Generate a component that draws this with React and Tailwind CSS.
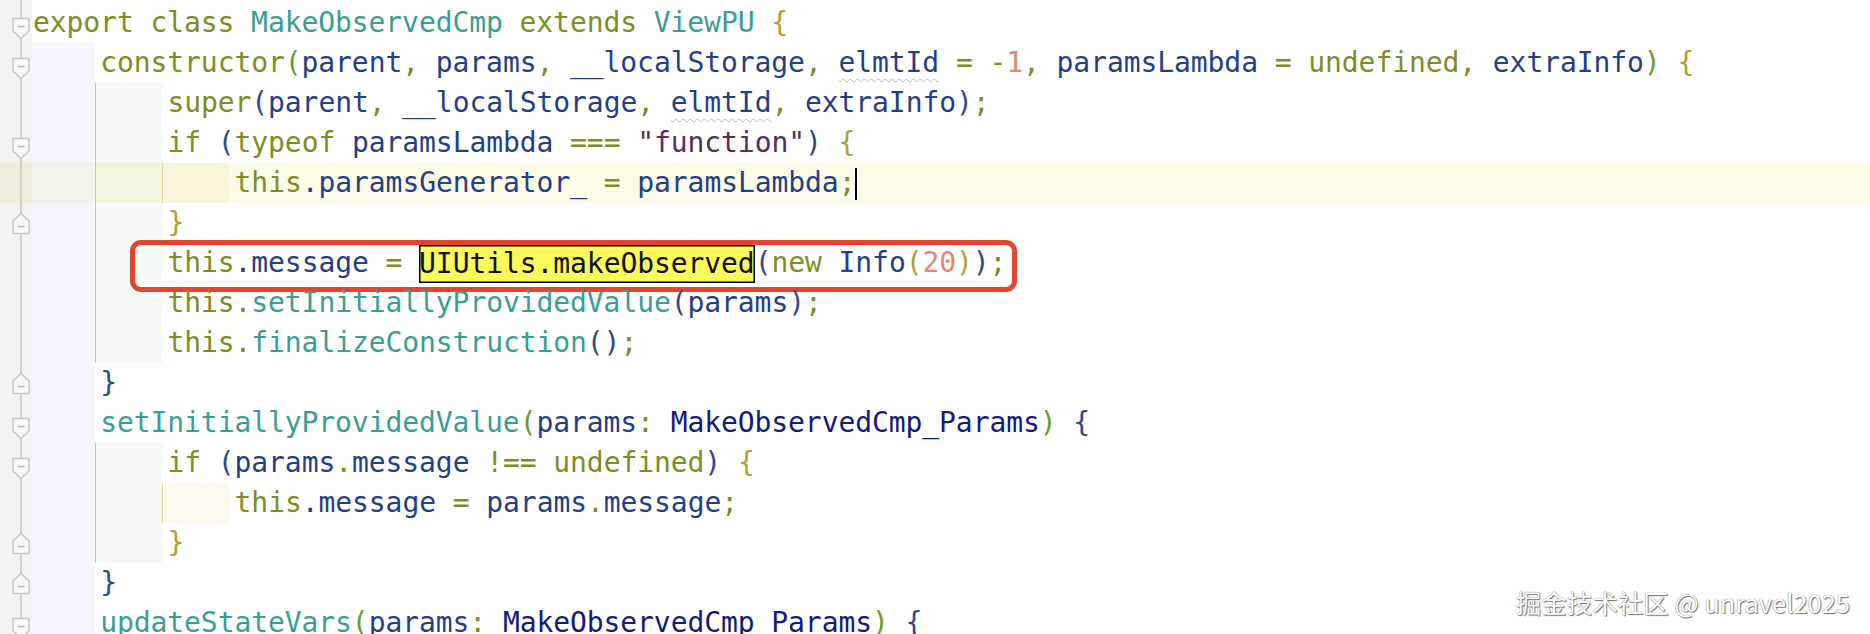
const K = 'text-[#7d8e25]';
const N = 'text-[#243f88]';
const T = 'text-[#3a9e92]';
const S = 'text-[#5c2a63]';
const NUM = 'text-[#e5876c]';
const TY = 'text-[#121b7e]';
const Y = 'text-[#aea231]';
const G = 'text-[#6a9b2c]';
const B = 'text-[#2e4a8c]';

const ML = ['ml-[1px]', 'ml-[5.2px]', 'ml-[5.4px]', 'ml-[5.6px]'];

function FoldMarker({ type }) {
    if (type === 'open') {
        return (
            <svg className="absolute left-[12px] top-[14px]" width="18" height="23" viewBox="0 0 18 23">
                <path d="M1 1.5 H17 V14 L9 21.5 L1 14 Z" fill="#f8f8f8" stroke="#c6c6c6" strokeWidth="1.5" strokeLinejoin="round" />
                <path d="M5.5 9.5 H12.5" stroke="#b8b8b8" strokeWidth="1.5" />
            </svg>
        );
    }
    return (
        <svg className="absolute left-[12px] top-[9px]" width="18" height="23" viewBox="0 0 18 23">
            <path d="M1 21.5 H17 V9 L9 1.5 L1 9 Z" fill="#f8f8f8" stroke="#c6c6c6" strokeWidth="1.5" strokeLinejoin="round" />
            <path d="M5.5 14.5 H12.5" stroke="#b8b8b8" strokeWidth="1.5" />
        </svg>
    );
}

function Gutter({ fold }) {
    return (
        <div className="relative w-[32px] h-full shrink-0 bg-[rgba(0,0,0,0.05)]">
            <div className="ml-[20px] w-[1.5px] h-full bg-[#d0d0d0]" />
            {fold && <FoldMarker type={fold} />}
        </div>
    );
}

function Row({ indent = 0, fold, hl, children, overlay }) {
    return (
        <div className={`relative flex h-[40px] shrink-0 ${hl ? 'bg-[#fcfbe8]' : ''}`}>
            <Gutter fold={fold} />
            <div className="flex h-full shrink-0">
                {indent >= 1 && <div className="w-[63px] h-full bg-[rgba(70,100,230,0.055)]" />}
                {indent >= 2 && <div className="w-[67px] h-full bg-[rgba(60,170,80,0.06)] border-l-[1.5px] border-[#b3c5e5]" />}
                {indent >= 3 && <div className="w-[67px] h-full bg-[rgba(200,180,60,0.08)] border-l-[1.5px] border-[#e3d69c]" />}
            </div>
            <div className={`whitespace-pre leading-[40px] ${ML[indent]}`}>{children}</div>
            {overlay}
        </div>
    );
}

function Tk({ c, children }) {
    return <span className={c}>{children}</span>;
}

function Wavy({ children }) {
    return (
        <span className={`${N} underline decoration-wavy decoration-[#a3c9a3] decoration-1 underline-offset-[6px]`}>{children}</span>
    );
}

export default function App() {
    return (
        <div className="relative w-[1870px] h-[634px] overflow-hidden bg-white font-['DejaVu_Sans_Mono',monospace] text-[28px] tracking-[-0.08px]">
            <div className="flex flex-col">
                {/* top sliver of the previous line */}
                <div className="flex h-[3px] shrink-0">
                    <Gutter />
                </div>

                <Row fold="open">
                    <Tk c={K}>export class </Tk><Tk c={T}>MakeObservedCmp</Tk><Tk c={K}> extends </Tk><Tk c={T}>ViewPU</Tk> <Tk c={Y}>{'{'}</Tk>
                </Row>
                <Row indent={1} fold="open">
                    <Tk c={K}>constructor</Tk><Tk c={G}>(</Tk><Tk c={N}>parent</Tk><Tk c={K}>, </Tk><Tk c={N}>params</Tk><Tk c={K}>, </Tk>
                    <Tk c={N}>__localStorage</Tk><Tk c={K}>, </Tk><Wavy>elmtId</Wavy><Tk c={K}> = -</Tk><Tk c={NUM}>1</Tk><Tk c={K}>, </Tk>
                    <Tk c={N}>paramsLambda</Tk><Tk c={K}> = undefined, </Tk><Tk c={N}>extraInfo</Tk><Tk c={G}>)</Tk> <Tk c={Y}>{'{'}</Tk>
                </Row>
                <Row indent={2}>
                    <Tk c={K}>super</Tk><Tk c={B}>(</Tk><Tk c={N}>parent</Tk><Tk c={K}>, </Tk><Tk c={N}>__localStorage</Tk><Tk c={K}>, </Tk>
                    <Wavy>elmtId</Wavy><Tk c={K}>, </Tk><Tk c={N}>extraInfo</Tk><Tk c={B}>)</Tk><Tk c={K}>;</Tk>
                </Row>
                <Row indent={2} fold="open">
                    <Tk c={K}>if </Tk><Tk c={B}>(</Tk><Tk c={K}>typeof </Tk><Tk c={N}>paramsLambda</Tk><Tk c={K}> === </Tk>
                    <Tk c={S}>"function"</Tk><Tk c={B}>)</Tk> <Tk c={Y}>{'{'}</Tk>
                </Row>
                <Row indent={3} hl>
                    <Tk c={K}>this</Tk><Tk c={N}>.paramsGenerator_</Tk><Tk c={K}> = </Tk><Tk c={N}>paramsLambda</Tk><Tk c={K}>;</Tk>
                    <span className="inline-block w-[2px] h-[32px] bg-black align-middle" />
                </Row>
                <Row indent={2} fold="close">
                    <Tk c={Y}>{'}'}</Tk>
                </Row>
                <Row
                    indent={2}
                    overlay={
                        <div className="absolute left-[130px] top-[-3px] w-[887px] h-[52px] border-[5px] border-[#e5452c] rounded-[11px] pointer-events-none" />
                    }
                >
                    <Tk c={K}>this</Tk><Tk c={N}>.message</Tk><Tk c={K}> = </Tk>
                    <span className="inline-block align-bottom leading-[38px] bg-[#fafa5a] text-[#111] shadow-[inset_0_0_0_1.5px_#000]">UIUtils.makeObserved</span>
                    <Tk c={B}>(</Tk><Tk c={K}>new </Tk><Tk c={N}>Info</Tk><Tk c={Y}>(</Tk><Tk c={NUM}>20</Tk><Tk c={Y}>)</Tk><Tk c={B}>)</Tk><Tk c={K}>;</Tk>
                </Row>
                <Row indent={2}>
                    <Tk c={K}>this.</Tk><Tk c={T}>setInitiallyProvidedValue</Tk><Tk c={B}>(</Tk><Tk c={N}>params</Tk><Tk c={B}>)</Tk><Tk c={K}>;</Tk>
                </Row>
                <Row indent={2}>
                    <Tk c={K}>this.</Tk><Tk c={T}>finalizeConstruction</Tk><Tk c={B}>()</Tk><Tk c={K}>;</Tk>
                </Row>
                <Row indent={1} fold="close">
                    <Tk c={B}>{'}'}</Tk>
                </Row>
                <Row indent={1} fold="open">
                    <Tk c={T}>setInitiallyProvidedValue</Tk><Tk c={G}>(</Tk><Tk c={N}>params</Tk><Tk c={K}>: </Tk>
                    <Tk c={TY}>MakeObservedCmp_Params</Tk><Tk c={G}>)</Tk> <Tk c={B}>{'{'}</Tk>
                </Row>
                <Row indent={2} fold="open">
                    <Tk c={K}>if </Tk><Tk c={B}>(</Tk><Tk c={N}>params</Tk><Tk c={K}>.</Tk><Tk c={N}>message</Tk><Tk c={K}> !== undefined</Tk>
                    <Tk c={B}>)</Tk> <Tk c={Y}>{'{'}</Tk>
                </Row>
                <Row indent={3}>
                    <Tk c={K}>this</Tk><Tk c={N}>.message</Tk><Tk c={K}> = </Tk><Tk c={N}>params</Tk><Tk c={K}>.</Tk><Tk c={N}>message</Tk><Tk c={K}>;</Tk>
                </Row>
                <Row indent={2} fold="close">
                    <Tk c={Y}>{'}'}</Tk>
                </Row>
                <Row indent={1} fold="close">
                    <Tk c={B}>{'}'}</Tk>
                </Row>
                <Row indent={1} fold="open">
                    <Tk c={T}>updateStateVars</Tk><Tk c={G}>(</Tk><Tk c={N}>params</Tk><Tk c={K}>: </Tk>
                    <Tk c={TY}>MakeObservedCmp_Params</Tk><Tk c={G}>)</Tk> <Tk c={B}>{'{'}</Tk>
                </Row>
            </div>

            {/* watermark */}
            <div className="absolute right-[20px] top-[583px] leading-[38px] text-[25.5px] tracking-normal text-white font-['Noto_Sans_CJK_SC',sans-serif] [text-shadow:0_0_1px_#555,1px_1px_1px_#777]">
                掘金技术社区 @ unravel2025
            </div>
        </div>
    );
}
